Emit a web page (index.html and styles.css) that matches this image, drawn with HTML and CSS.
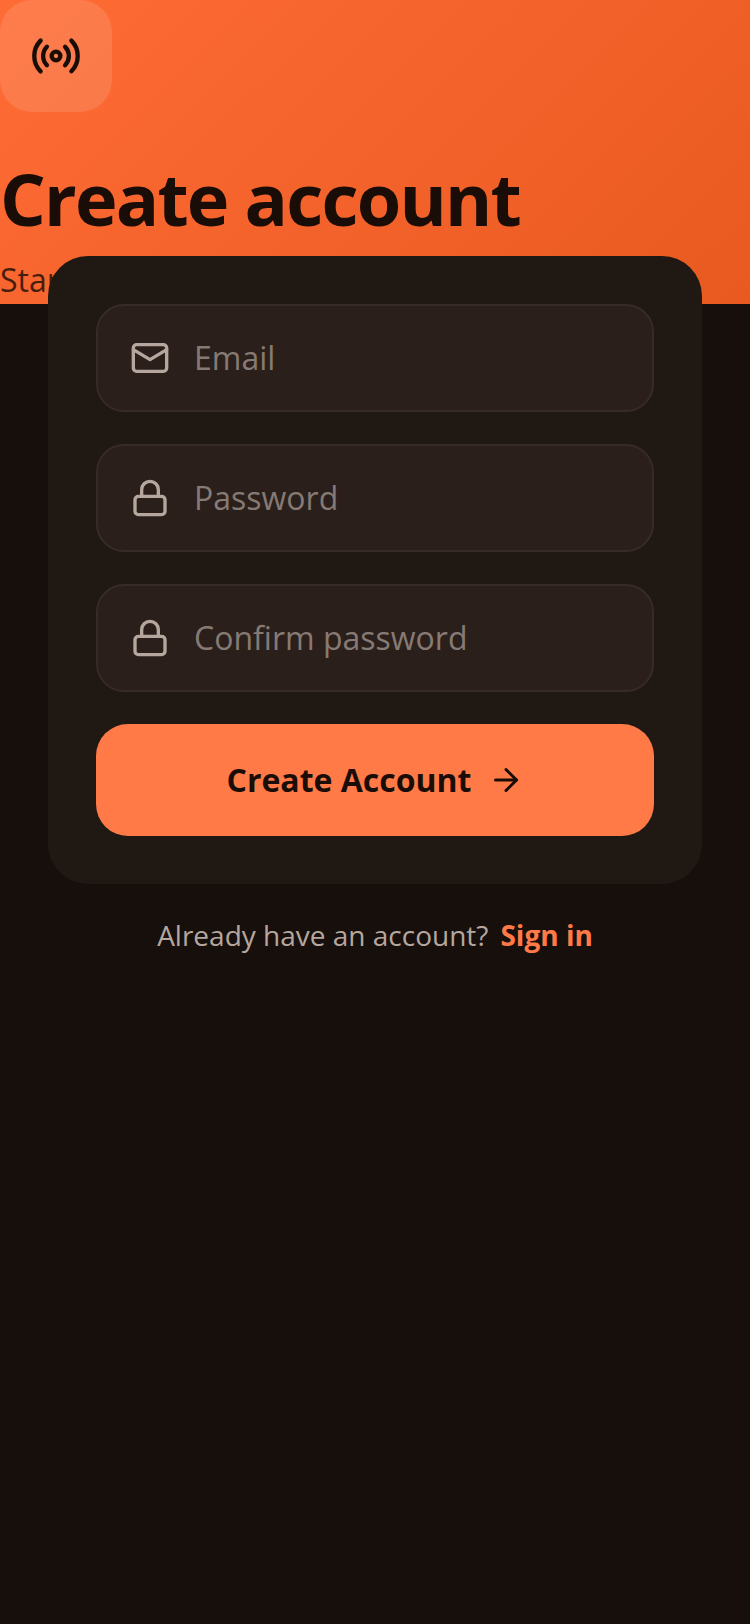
FILE: index.html
```html
<!DOCTYPE html>
<html lang="en">
<head>
  <meta charset="UTF-8">
  <title>Create account</title>
  <link rel="stylesheet" href="styles.css">
</head>
<body>
  <header class="hero">
    <div class="logo-box">
      <svg class="logo-icon" viewBox="0 0 24 24" fill="none" stroke="currentColor" stroke-width="2" stroke-linecap="round" stroke-linejoin="round">
        <path d="M4.9 19.1C1 15.2 1 8.8 4.9 4.9"/>
        <path d="M7.8 16.2c-2.3-2.3-2.3-6.1 0-8.5"/>
        <circle cx="12" cy="12" r="2"/>
        <path d="M16.2 7.8c2.3 2.3 2.3 6.1 0 8.5"/>
        <path d="M19.1 4.9C23 8.8 23 15.1 19.1 19"/>
      </svg>
    </div>
    <h1 class="hero-title">Create account</h1>
    <p class="hero-sub">Start your journey today</p>
  </header>

  <main class="card">
    <div class="field">
      <svg class="field-icon" viewBox="0 0 24 24" fill="none" stroke="currentColor" stroke-width="2" stroke-linecap="round" stroke-linejoin="round">
        <rect x="2" y="4" width="20" height="16" rx="2"/>
        <path d="m22 7-10 6L2 7"/>
      </svg>
      <span class="placeholder">Email</span>
    </div>
    <div class="field">
      <svg class="field-icon" viewBox="0 0 24 24" fill="none" stroke="currentColor" stroke-width="2" stroke-linecap="round" stroke-linejoin="round">
        <rect x="3" y="11" width="18" height="11" rx="2"/>
        <path d="M7 11V7a5 5 0 0 1 10 0v4"/>
      </svg>
      <span class="placeholder">Password</span>
    </div>
    <div class="field">
      <svg class="field-icon" viewBox="0 0 24 24" fill="none" stroke="currentColor" stroke-width="2" stroke-linecap="round" stroke-linejoin="round">
        <rect x="3" y="11" width="18" height="11" rx="2"/>
        <path d="M7 11V7a5 5 0 0 1 10 0v4"/>
      </svg>
      <span class="placeholder">Confirm password</span>
    </div>
    <button class="submit">
      <span class="submit-label">Create Account</span>
      <svg class="submit-icon" viewBox="0 0 24 24" fill="none" stroke="currentColor" stroke-width="2" stroke-linecap="round" stroke-linejoin="round">
        <path d="M5 12h14"/>
        <path d="m12 5 7 7-7 7"/>
      </svg>
    </button>
  </main>

  <p class="signin">
    <span>Already have an account?</span>
    <a class="signin-link">Sign in</a>
  </p>
</body>
</html>
```

FILE: styles.css
```css
* {
  box-sizing: border-box;
}
body {
  margin: 0;
  min-height: 1624px;
  background: #170f0c;
  font-family: "Open Sans", "Noto Sans", sans-serif;
}
.hero {
  height: 304px;
  background: linear-gradient(135deg, #ff6b35, #e85a20);
  color: #1a0d07;
}
.logo-box {
  width: 112px;
  height: 112px;
  border-radius: 32px;
  background: rgba(255, 255, 255, 0.12);
  display: flex;
  justify-content: center;
  align-items: center;
}
.logo-icon {
  width: 52px;
  height: 52px;
}
.hero-title {
  margin: 40px 0 0;
  font-size: 72px;
  line-height: 92px;
  font-weight: 700;
  letter-spacing: -1.8px;
}
.hero-sub {
  margin: 14px 0 0;
  font-size: 32px;
  line-height: 44px;
  color: #1a0d07;
  opacity: 0.8;
  white-space: nowrap;
}
.card {
  margin: -48px 48px 0;
  padding: 48px;
  background: #201813;
  border-radius: 40px;
  display: flex;
  flex-direction: column;
  gap: 32px;
  position: relative;
}
.field {
  height: 108px;
  padding: 0 32px;
  background: #2b1f1b;
  border: 2px solid #382b26;
  border-radius: 28px;
  display: flex;
  align-items: center;
  gap: 24px;
}
.field-icon {
  width: 40px;
  height: 40px;
  color: #b5a79e;
  flex-shrink: 0;
}
.placeholder {
  padding-bottom: 2px;
  font-size: 32px;
  color: #867a74;
}
.submit {
  height: 112px;
  border: none;
  border-radius: 32px;
  background: #ff7a47;
  color: #1a0d07;
  font-family: inherit;
  font-size: 32px;
  font-weight: 700;
  display: flex;
  justify-content: center;
  align-items: center;
  gap: 16px;
}
.submit-label {
  padding-bottom: 2px;
}
.submit-icon {
  width: 36px;
  height: 36px;
}
.signin {
  margin: 32px 0 0;
  display: flex;
  justify-content: center;
  gap: 12px;
  font-size: 28px;
  line-height: 38px;
  color: #b5a79e;
}
.signin-link {
  color: #ff7a47;
  font-weight: 700;
}
```
